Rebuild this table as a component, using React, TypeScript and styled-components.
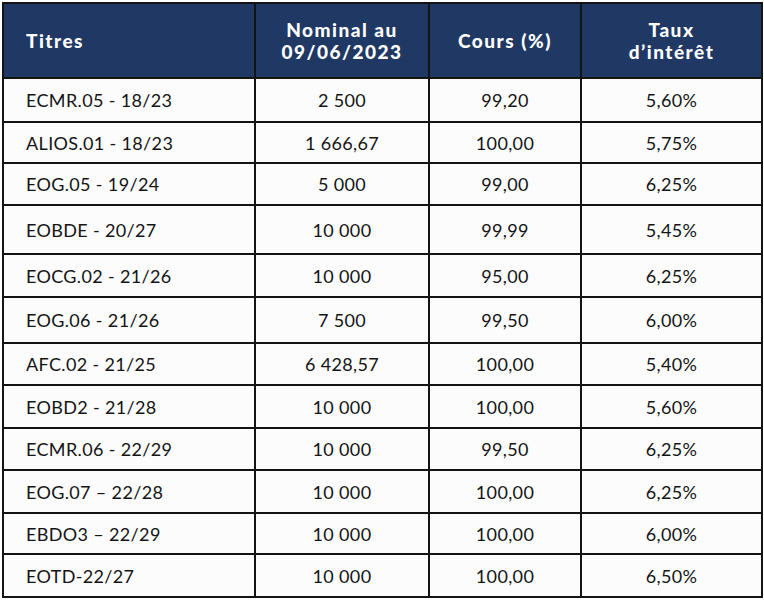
import React from 'react'
import styled, { createGlobalStyle } from 'styled-components'

const GlobalStyle = createGlobalStyle`
  html, body {
    margin: 0;
    padding: 0;
    background: #ffffff;
  }
  body {
    font-family: Lato, "Open Sans", "Liberation Sans", sans-serif;
  }
`

const Page = styled.div`
  padding: 2px 0 0 2px;
  width: 764px;
  height: 600px;
  box-sizing: border-box;
`

const Table = styled.table`
  width: 759px;
  border-collapse: collapse;
  table-layout: fixed;
  background: #fcfcfc;
  color: #141414;
  font-size: 18px;
`

const HeadRow = styled.tr`
  height: 75px;
  background: #203864;
`

const HeadCell = styled.th<{ $align?: 'left' | 'center' }>`
  border: 2px solid #141414;
  padding: 0 22px;
  color: #ffffff;
  font-weight: 900;
  font-size: 19px;
  letter-spacing: 1.5px;
  line-height: 22px;
  text-align: ${({ $align }) => $align || 'center'};
`

const BodyRow = styled.tr<{ $h: number }>`
  height: ${({ $h }) => $h}px;
`

const Cell = styled.td<{ $align?: 'left' | 'center' }>`
  border: 2px solid #141414;
  padding: 0 22px;
  line-height: 20px;
  letter-spacing: 0.35px;
  text-align: ${({ $align }) => $align || 'center'};
  white-space: pre;
`

interface Titre {
  name: string
  nominal: string
  cours: string
  taux: string
  h: number
}

const rows: Titre[] = [
  { name: 'ECMR.05 - 18/23', nominal: '2 500', cours: '99,20', taux: '5,60%', h: 44 },
  { name: 'ALIOS.01 - 18/23', nominal: '1 666,67', cours: '100,00', taux: '5,75%', h: 41 },
  { name: 'EOG.05 - 19/24', nominal: '5 000', cours: '99,00', taux: '6,25%', h: 42 },
  { name: 'EOBDE - 20/27', nominal: '10 000', cours: '99,99', taux: '5,45%', h: 49 },
  { name: 'EOCG.02 - 21/26', nominal: '10 000', cours: '95,00', taux: '6,25%', h: 43 },
  { name: 'EOG.06 - 21/26', nominal: '7 500', cours: '99,50', taux: '6,00%', h: 46 },
  { name: 'AFC.02 - 21/25', nominal: '6 428,57', cours: '100,00', taux: '5,40%', h: 42 },
  { name: 'EOBD2 - 21/28', nominal: '10 000', cours: '100,00', taux: '5,60%', h: 43 },
  { name: 'ECMR.06 - 22/29', nominal: '10 000', cours: '99,50', taux: '6,25%', h: 42 },
  { name: 'EOG.07 \u2013 22/28', nominal: '10 000', cours: '100,00', taux: '6,25%', h: 43 },
  { name: 'EBDO3 \u2013 22/29', nominal: '10 000', cours: '100,00', taux: '6,00%', h: 41 },
  { name: 'EOTD-22/27', nominal: '10 000', cours: '100,00', taux: '6,50%', h: 43 },
]

const App = () => {
  return (
    <>
      <GlobalStyle />
      <Page>
        <Table>
          <colgroup>
            <col style={{ width: 252 }} />
            <col style={{ width: 174 }} />
            <col style={{ width: 152 }} />
            <col style={{ width: 181 }} />
          </colgroup>
          <thead>
            <HeadRow>
              <HeadCell $align="left">Titres</HeadCell>
              <HeadCell>Nominal au<br />09/06/2023</HeadCell>
              <HeadCell>Cours (%)</HeadCell>
              <HeadCell>Taux<br />d’intérêt</HeadCell>
            </HeadRow>
          </thead>
          <tbody>
            {rows.map((r) => (
              <BodyRow key={r.name} $h={r.h}>
                <Cell $align="left">{r.name}</Cell>
                <Cell>{r.nominal}</Cell>
                <Cell>{r.cours}</Cell>
                <Cell>{r.taux}</Cell>
              </BodyRow>
            ))}
          </tbody>
        </Table>
      </Page>
    </>
  )
}

export default App
